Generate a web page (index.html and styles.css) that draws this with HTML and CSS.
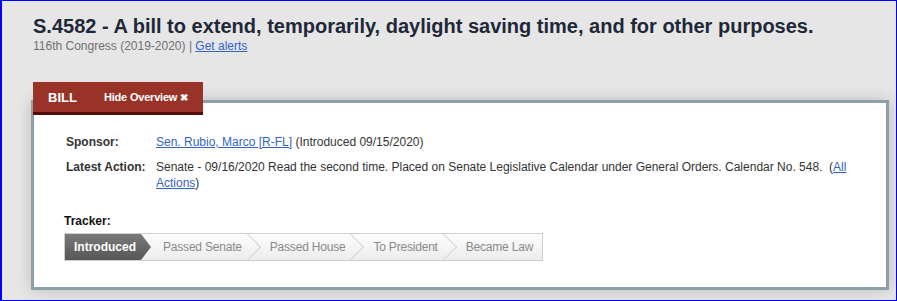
FILE: index.html
```html
<!DOCTYPE html>
<html lang="en">
<head>
    <meta charset="UTF-8">
    <title>S.4582 - 116th Congress</title>
    <link rel="stylesheet" href="styles.css">
</head>
<body>
    <!-- Bill heading -->
    <header class="bill-header">
        <h1 class="bill-title">S.4582 - A bill to extend, temporarily, daylight saving time, and for other purposes.</h1>
        <p class="bill-meta">116th Congress (2019-2020) | <a href="#">Get alerts</a></p>
    </header>

    <!-- Overview -->
    <section class="overview">
        <div class="overview-tabs">
            <span class="tab-label">BILL</span>
            <a href="#" class="tab-toggle">Hide Overview <span class="tab-x">&#10006;</span></a>
        </div>

        <div class="overview-panel">
            <div class="overview-row">
                <span class="row-label">Sponsor:</span>
                <span class="row-value"><a href="#">Sen. Rubio, Marco [R-FL]</a> (Introduced 09/15/2020)</span>
            </div>
            <div class="overview-row">
                <span class="row-label">Latest Action:</span>
                <span class="row-value">Senate - 09/16/2020 Read the second time. Placed on Senate Legislative Calendar under General Orders. Calendar No. 548.&nbsp; (<a href="#">All Actions</a>)</span>
            </div>

            <div class="tracker">
                <h3 class="tracker-title">Tracker:</h3>
                <ol class="tracker-steps">
                    <li class="step step-current">Introduced</li>
                    <li class="step">Passed Senate</li>
                    <li class="step">Passed House</li>
                    <li class="step">To President</li>
                    <li class="step step-last">Became Law</li>
                </ol>
            </div>
        </div>
    </section>
</body>
</html>
```

FILE: styles.css
```css
/* General */
* {
    margin: 0;
    padding: 0;
    box-sizing: border-box;
}

html, body {
    height: 301px;
}

body {
    background: #e6e6e6;
    font-family: "Liberation Sans", Arial, sans-serif;
    font-size: 12px;
    color: #333;
    border: 1px solid #0000ff;
    border-left-width: 2px;
    overflow: hidden;
}

a {
    color: #3463c7;
    text-decoration: underline;
}

/* Heading */
.bill-header {
    padding: 12px 0 0 31px;
}

.bill-title {
    font-size: 20px;
    line-height: 26px;
    font-weight: bold;
    color: #1f2839;
}

.bill-meta {
    color: #707070;
    line-height: 14px;
}

/* Overview box */
.overview {
    margin: 29px 0 0 29px;
    width: 858px;
}

.overview-tabs {
    position: relative;
    z-index: 2;
    display: flex;
    align-items: center;
    width: 170px;
    height: 33px;
    margin-left: 2px;
    background: #993328;
    border-bottom: 3px solid #560b0b;
    color: #fff;
    font-weight: bold;
}

.tab-label {
    font-size: 13px;
    padding-left: 15px;
    width: 71px;
}

.tab-toggle {
    color: #fff;
    text-decoration: none;
    font-size: 11px;
    letter-spacing: -0.2px;
}

.tab-x {
    font-size: 10px;
}

.overview-panel {
    margin-top: -15px;
    height: 190px;
    background: #fff;
    border: 3px solid #8d9fa9;
    box-shadow: 0 0 14px rgba(0, 0, 0, 0.18);
    padding: 31px 28px 0 28px;
}

.overview-row {
    display: flex;
    line-height: 16px;
    margin-bottom: 9px;
    padding-left: 4px;
}

.row-label {
    width: 90px;
    flex-shrink: 0;
    font-weight: bold;
    color: #333;
}

.row-value {
    flex: 1;
}

/* Tracker */
.tracker {
    margin: 22px 0 0 2px;
}

.tracker-title {
    font-size: 12px;
    line-height: 16px;
    color: #111;
    margin-bottom: 4px;
}

.tracker-steps {
    list-style: none;
    display: flex;
    width: 479px;
    height: 28px;
    border: 1px solid #cfcfcf;
    background: linear-gradient(#fdfdfd, #ececec);
    overflow: hidden;
}

.step {
    position: relative;
    flex-shrink: 0;
    white-space: nowrap;
    line-height: 26px;
    font-size: 12px;
    letter-spacing: -0.2px;
    color: #8a8a8a;
    padding: 0 15px 0 13px;
}

.step::after {
    content: "";
    position: absolute;
    top: 3px;
    right: 0;
    width: 19px;
    height: 19px;
    border-top: 1px solid #d4d4d4;
    border-right: 1px solid #d4d4d4;
    transform: rotate(45deg);
}

.step-current {
    color: #fff;
    font-weight: bold;
    letter-spacing: 0;
    padding: 0 15px 0 9px;
    background: linear-gradient(#7a7a7a, #565656);
    clip-path: polygon(0 0, calc(100% - 10px) 0, 100% 50%, calc(100% - 10px) 100%, 0 100%);
}

.step-current + .step {
    padding-left: 12px;
}

.step-current::after,
.step-last::after {
    display: none;
}
```
